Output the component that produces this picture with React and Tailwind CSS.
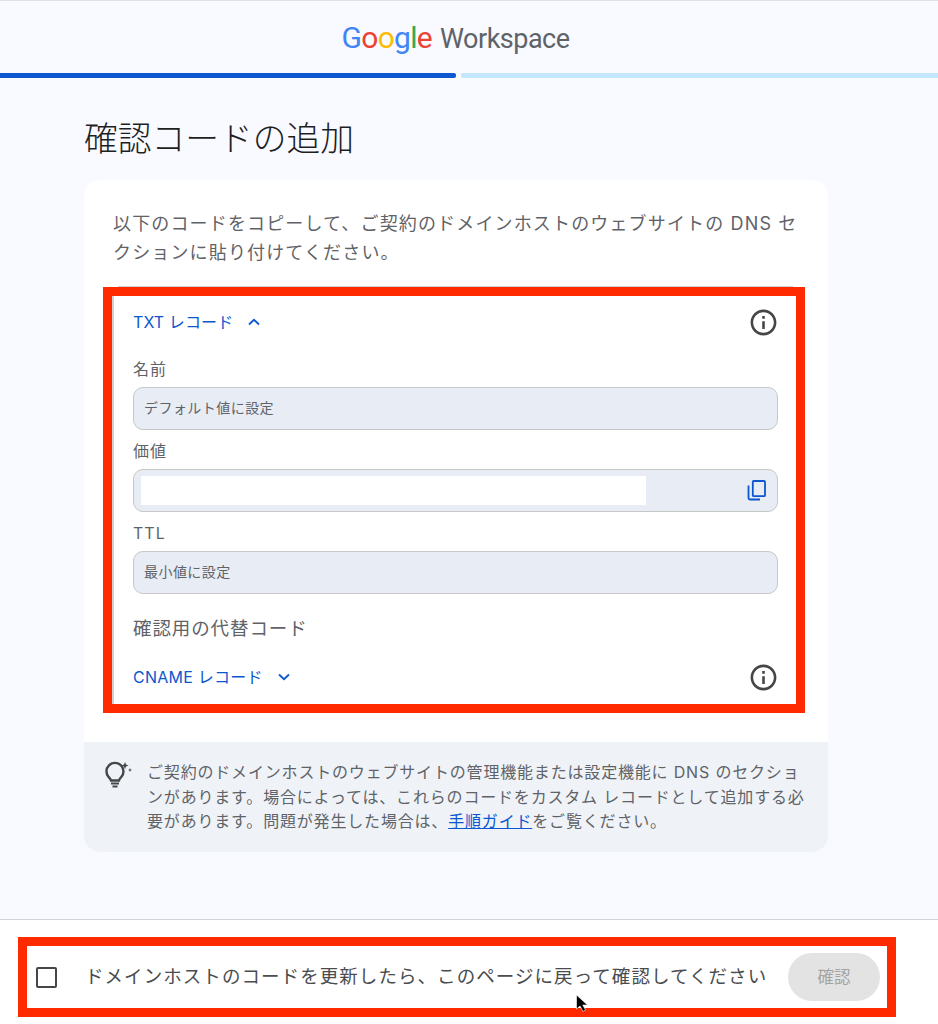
const JP = "font-['Inter','Noto_Sans_CJK_JP',sans-serif]";

function InfoIcon() {
  return (
    <svg width="31" height="31" viewBox="0 0 24 24" fill="#444746">
      <path d="M11 7h2v2h-2zm0 4h2v6h-2zm1-9C6.48 2 2 6.48 2 12s4.48 10 10 10 10-4.48 10-10S17.52 2 12 2zm0 18c-4.41 0-8-3.59-8-8s3.59-8 8-8 8 3.59 8 8-3.59 8-8 8z" />
    </svg>
  );
}

function Chevron({ up }) {
  return (
    <svg width="12" height="8" viewBox="0 0 12 8" fill="none" stroke="#0b57d0" strokeWidth="1.8" className="ml-[15px]">
      <path d={up ? "M1 6.5 L6 1.8 L11 6.5" : "M1 1.5 L6 6.2 L11 1.5"} />
    </svg>
  );
}

function Field({ label, children }) {
  return (
    <div>
      <div className="h-[39px] pt-[2px] flex items-center text-[16px] tracking-[1px] text-[#5f6368]">{label}</div>
      <div className="h-[43px] rounded-[10px] border border-[#c7c7c7] bg-[#e8ecf5] flex items-center text-[14px] tracking-[0.45px] text-[#5f6368] pl-[10px] pb-[3px]">
        {children}
      </div>
    </div>
  );
}

export default function App() {
  return (
    <div className={"relative w-[938px] h-[1024px] overflow-hidden bg-[#f8faff] flex flex-col " + JP}>
      <div className="h-[1px] bg-[#dfe1e3]" />
      <header className="h-[72px] flex items-center justify-center pt-[2px] pr-[27px]">
        <span className="font-['Roboto',sans-serif] text-[30px] tracking-[-0.7px] leading-none">
          <span className="text-[#4285f4]">G</span>
          <span className="text-[#ea4335]">o</span>
          <span className="text-[#fbbc04]">o</span>
          <span className="text-[#4285f4]">g</span>
          <span className="text-[#34a853]">l</span>
          <span className="text-[#ea4335]">e</span>
          <span className="text-[#5f6368] ml-[8px] tracking-[-0.5px] text-[27px]">Workspace</span>
        </span>
      </header>
      <div className="flex gap-[5px] h-[5px]">
        <div className="w-[456px] bg-[#0b57d0] rounded-r-[2px]" />
        <div className="flex-1 bg-[#c2e7ff] rounded-l-[2px]" />
      </div>

      <main className="flex-1 pl-[84px]">
        <h1 className="mt-[41px] h-[39px] flex items-center text-[33.75px] font-light text-[#1f1f1f] leading-none">確認コードの追加</h1>
        <section className="mt-[22px] w-[744px] h-[672px] bg-white rounded-[16px] flex flex-col">
          <p className="pl-[29px] pr-[28px] pt-[29px] h-[106px] text-[18px] tracking-[1.15px] leading-[29px] text-[#5f6368]">
            以下のコードをコピーして、ご契約のドメインホストのウェブサイトの DNS セクションに貼り付けてください。
          </p>
          <div className="ml-[34px] w-[675px] h-[1px] bg-[#d0d0d0]" />
          <div className="ml-[19px] w-[702px] h-[426px] border-[9px] border-[#ff2a00]">
            <div className="h-full border-l-2 border-[#d0d0d0] pl-[19px] pr-[18px]">
              <div className="h-[52px] flex items-center justify-between">
                <div className="flex items-center text-[16px] tracking-[0.1px] text-[#0b57d0]">
                  TXT レコード
                  <Chevron up />
                </div>
                <div className="mr-[-1px]"><InfoIcon /></div>
              </div>
              <Field label="名前">デフォルト値に設定</Field>
              <Field label="価値">
                <div className="flex-1 h-full flex items-center justify-between pr-[11px] pt-[3px]">
                  <div className="ml-[-3px] w-[505px] h-[29px] bg-white" />
                  <svg width="19" height="21" viewBox="0 0 19 21" fill="none" stroke="#0b57d0" strokeWidth="1.8">
                    <rect x="5.8" y="1" width="12.2" height="15.2" rx="1" />
                    <path d="M1.5 5.6V18a1.5 1.5 0 0 0 1.5 1.5h10" />
                  </svg>
                </div>
              </Field>
              <Field label="TTL">最小値に設定</Field>
              <div className="h-[68px] pt-[2px] flex items-center text-[18.5px] tracking-[0.9px] text-[#5f6368]">確認用の代替コード</div>
              <div className="h-[30px] flex items-center justify-between">
                <div className="flex items-center text-[16px] tracking-[0.25px] text-[#0b57d0]">
                  CNAME レコード
                  <Chevron />
                </div>
                <div className="mr-[-1px]"><InfoIcon /></div>
              </div>
            </div>
          </div>
          <div className="mt-[29px] flex-1 bg-[#eff3f8] rounded-b-[16px] flex pl-[19px] pr-[20px] pt-[18px]">
            <svg width="30" height="30" viewBox="0 0 30 30" className="shrink-0 mt-[1px]" fill="none" stroke="#444746">
              <path d="M8 19.5c-.4-1.6-1.4-2.4-2.3-3.4A8.5 8.5 0 1 1 18.3 16c-.9 1-1.9 1.8-2.3 3.5z" strokeWidth="2.4" />
              <path d="M8 22.5h8" strokeWidth="2" />
              <path d="M9.5 25.5h5" strokeWidth="2" />
              <path d="M22 1l1 2.6L25.6 4.6 23 5.6 22 8.2 21 5.6 18.4 4.6 21 3.6z" fill="#444746" stroke="none" />
              <path d="M27 7l.6 1.4L29 9l-1.4.6L27 11l-.6-1.4L25 9l1.4-.6z" fill="#444746" stroke="none" />
            </svg>
            <p className="ml-[14px] text-[16px] tracking-[0.82px] leading-[24.5px] text-[#5f6368]">
              ご契約のドメインホストのウェブサイトの管理機能または設定機能に DNS のセクションがあります。場合によっては、これらのコードをカスタム レコードとして追加する必要があります。問題が発生した場合は、<span className="text-[#0b57d0] underline">手順ガイド</span>をご覧ください。
            </p>
          </div>
        </section>
      </main>

      <footer className="h-[105px] bg-white border-t border-[#d0d2d4] pt-[17px] pl-[18px]">
        <div className="w-[878px] h-[80px] border-[9px] border-[#ff2a00] flex items-center pl-[9px] pr-[7px]">
          <div className="w-[21px] h-[21px] rounded-[2px] border-[2px] border-[#444746] shrink-0" />
          <div className="ml-[28px] flex-1 text-[18.5px] tracking-[1.06px] text-[#4a4c4f]">ドメインホストのコードを更新したら、このページに戻って確認してください</div>
          <div className="w-[92px] h-[48px] rounded-full bg-[#e3e3e3] flex items-center justify-center text-[16.5px] text-[#a3a3a3]">確認</div>
        </div>
      </footer>

      <svg width="14" height="19" viewBox="0 0 14 19" className="absolute left-[575px] top-[994px]">
        <path d="M1.5 1 L1.5 15 L5 12 L8 17.5 L10.5 16 L7.8 11 L12.5 11 Z" fill="#000" stroke="#fff" strokeWidth="0.6" />
      </svg>
    </div>
  );
}
